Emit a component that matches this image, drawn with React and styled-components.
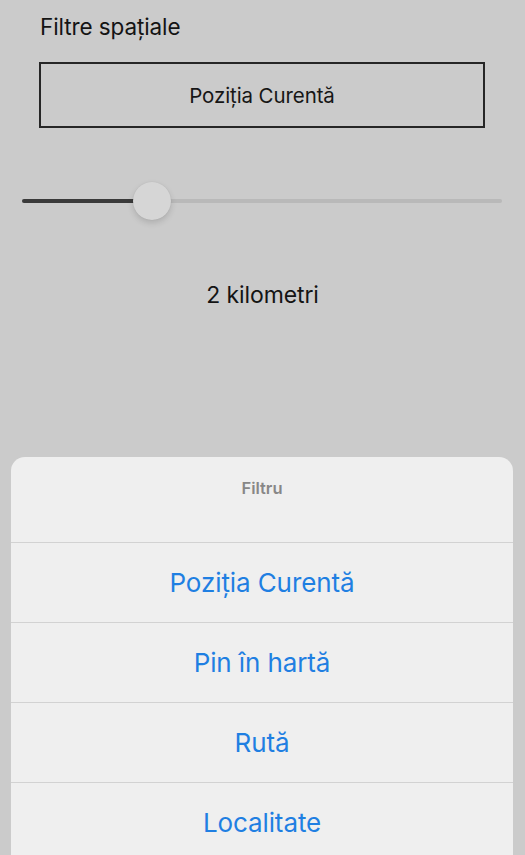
import React from "react";
import styled, { createGlobalStyle } from "styled-components";

const Global = createGlobalStyle`
  html, body { margin: 0; padding: 0; background: #cbcbcb; }
  body { font-family: Inter, "Liberation Sans", sans-serif; -webkit-font-smoothing: antialiased; }
  #root { min-height: 855px; }
`;

const Screen = styled.div`
  width: 525px;
  height: 855px;
  background: #cbcbcb;
  display: flex;
  flex-direction: column;
  overflow: hidden;
`;

const Content = styled.div`
  padding: 14px 40px 0 40px;
  display: flex;
  flex-direction: column;
`;

const Title = styled.div`
  font-size: 22.5px;
  color: #141414;
  line-height: 26px;
  letter-spacing: -0.1px;
`;

const SelectBox = styled.div`
  margin: 22px 0 0 -1px;
  width: 446px;
  height: 66px;
  box-sizing: border-box;
  border: 2px solid #262626;
  display: flex;
  align-items: center;
  justify-content: center;
  font-size: 20.5px;
  color: #161616;
  letter-spacing: -0.1px;
`;

const SliderWrap = styled.div`
  margin: 39px 0 0 -18px;
  width: 480px;
  height: 40px;
  position: relative;
  display: flex;
  align-items: center;
`;

const Track = styled.div`
  width: 100%;
  height: 4px;
  border-radius: 2px;
  background: #b9b9b9;
  position: relative;
`;

const Fill = styled.div`
  height: 100%;
  border-radius: 2px;
  background: #3a3a3a;
`;

const Thumb = styled.div`
  position: absolute;
  top: 1px;
  width: 38px;
  height: 38px;
  border-radius: 50%;
  background: #d6d6d6;
  box-shadow: 0 3px 6px rgba(0, 0, 0, 0.14), 0 0 1px rgba(0, 0, 0, 0.12);
`;

const Distance = styled.div`
  margin-top: 60px;
  text-align: center;
  font-size: 23px;
  color: #141414;
  letter-spacing: -0.1px;
`;

const Sheet = styled.div`
  margin: auto 12px -7px 11px;
  flex-shrink: 0;
  background: #efefef;
  border-radius: 14px 14px 0 0;
  display: flex;
  flex-direction: column;
  overflow: hidden;
`;

const SheetHeader = styled.div`
  height: 85px;
  box-sizing: border-box;
  padding-top: 21px;
  line-height: 20px;
  text-align: center;
  font-size: 16.5px;
  font-weight: 600;
  color: #878787;
`;

const Option = styled.div`
  height: 80px;
  box-sizing: border-box;
  border-top: 1.5px solid #d2d2d2;
  display: flex;
  align-items: center;
  justify-content: center;
  font-size: 26px;
  color: #1f7fe2;
  letter-spacing: -0.1px;
`;

const options = ["Poziția Curentă", "Pin în hartă", "Rută", "Localitate"];

export default function App() {
  const pct = 0.24;
  return (
    <>
      <Global />
      <Screen>
        <Content>
          <Title>Filtre spațiale</Title>
          <SelectBox>Poziția Curentă</SelectBox>
        </Content>
        <Content>
          <SliderWrap>
            <Track>
              <Fill style={{ width: `${pct * 100}%` }} />
            </Track>
            <Thumb style={{ left: `${pct * 480 - 4}px` }} />
          </SliderWrap>
        </Content>
        <Distance>2 kilometri</Distance>
        <Sheet>
          <SheetHeader>Filtru</SheetHeader>
          {options.map((o) => (
            <Option key={o}>{o}</Option>
          ))}
        </Sheet>
      </Screen>
    </>
  );
}
